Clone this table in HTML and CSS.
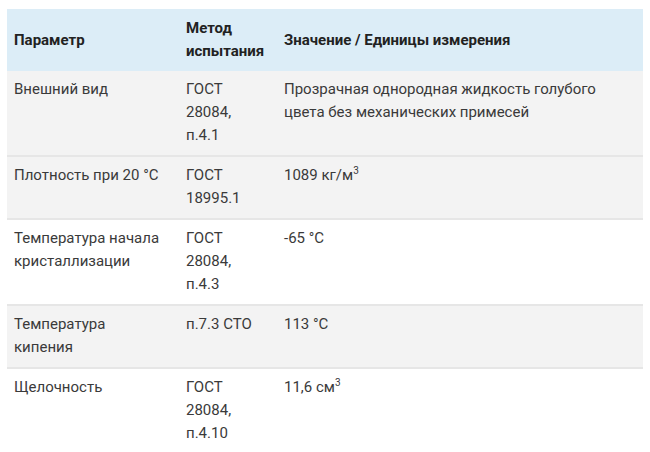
FILE: index.html
```html
<!DOCTYPE html>
<html lang="ru">
<head>
<meta charset="utf-8">
<title>Параметры</title>
<link rel="stylesheet" href="styles.css">
</head>
<body>
<table class="spec">
  <colgroup>
    <col class="c1"><col class="c2"><col class="c3">
  </colgroup>
  <thead>
    <tr>
      <th>Параметр</th>
      <th>Метод испытания</th>
      <th>Значение / Единицы измерения</th>
    </tr>
  </thead>
  <tbody>
    <tr class="gray">
      <td>Внешний вид</td>
      <td>ГОСТ 28084, п.4.1</td>
      <td>Прозрачная однородная жидкость голубого цвета без механических примесей</td>
    </tr>
    <tr class="gray">
      <td>Плотность при 20 °С</td>
      <td>ГОСТ 18995.1</td>
      <td>1089 кг/м<sup>3</sup></td>
    </tr>
    <tr>
      <td>Температура начала кристаллизации</td>
      <td>ГОСТ 28084, п.4.3</td>
      <td>-65 °С</td>
    </tr>
    <tr class="gray">
      <td>Температура кипения</td>
      <td>п.7.3 СТО</td>
      <td>113 °С</td>
    </tr>
    <tr>
      <td>Щелочность</td>
      <td>ГОСТ 28084, п.4.10</td>
      <td>11,6 см<sup>3</sup></td>
    </tr>
  </tbody>
</table>
</body>
</html>
```

FILE: styles.css
```css
html, body {
  margin: 0;
  padding: 0;
  background: #ffffff;
}
body {
  padding: 9px 7px 0 7px;
  font-family: Roboto, "Liberation Sans", Arial, sans-serif;
  font-size: 15px;
  color: #3a3a3a;
}
.spec {
  width: 636px;
  border-collapse: collapse;
  table-layout: fixed;
}
.c1 { width: 172px; }
.c2 { width: 98px; }
.c3 { width: 366px; }
.spec th,
.spec td {
  text-align: left;
  vertical-align: top;
  padding: 7px 12px 8px 7px;
  line-height: 23px;
}
.spec th {
  vertical-align: middle;
  padding-top: 8px;
  background: #dcedf7;
  color: #222222;
  font-weight: bold;
}
.spec td {
  border-bottom: 2px solid #e6e6e6;
}
.spec tr.gray td {
  background: #f3f3f3;
}
.spec sup {
  font-size: 10px;
  line-height: 0;
  vertical-align: 6px;
}
```
